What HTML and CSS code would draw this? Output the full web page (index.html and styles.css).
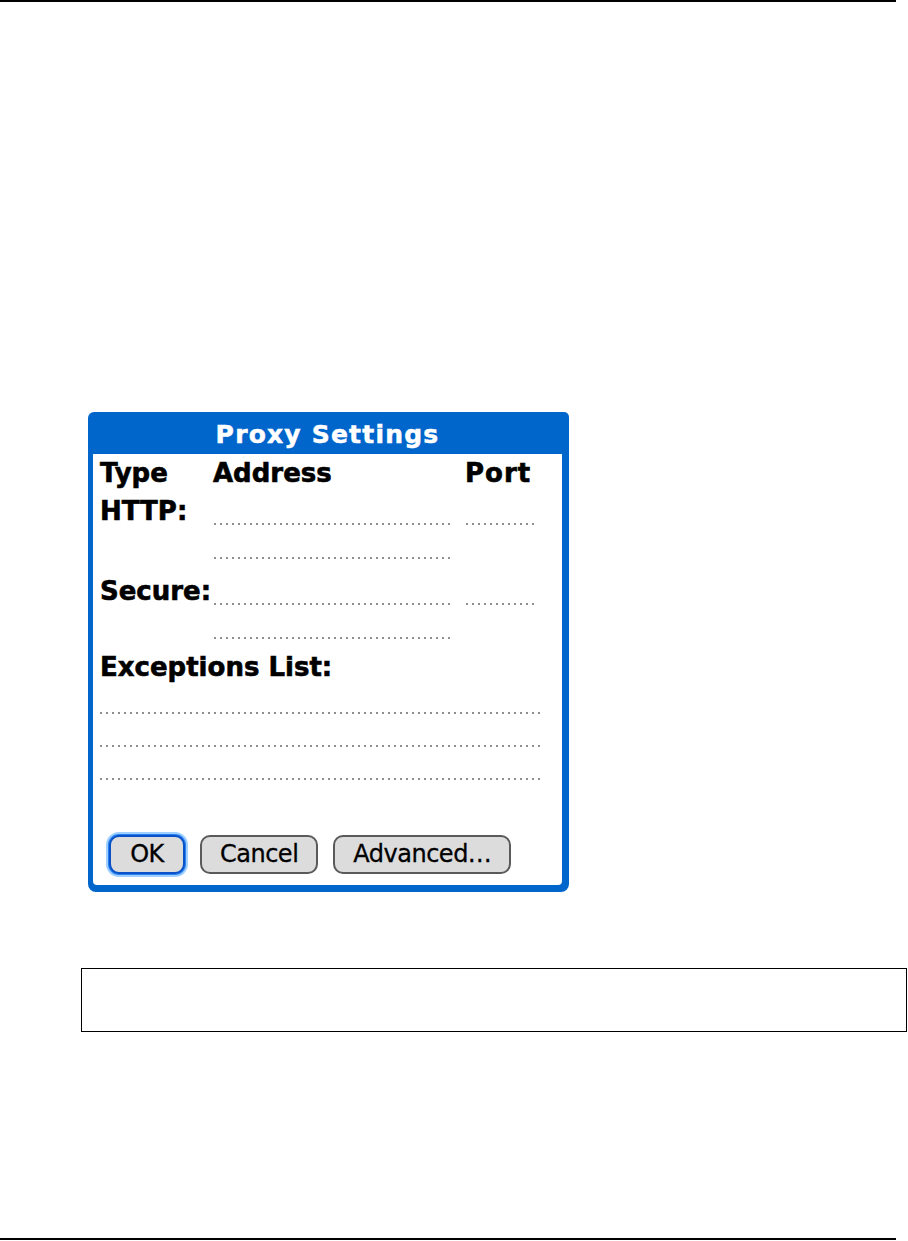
FILE: index.html
```html
<!DOCTYPE html>
<html lang="en">
<head>
    <meta charset="UTF-8">
    <meta name="viewport" content="width=device-width, initial-scale=1.0">
    <title>Proxy Settings</title>
    <link rel="stylesheet" href="styles.css">
</head>
<body>
    <div class="page">
        <div class="page-rule"></div>

        <div class="dialog">
            <div class="dialog-title">Proxy Settings</div>
            <div class="dialog-body">
                <div class="proxy-head">
                    <span class="col-label">Type</span>
                    <span class="col-address">Address</span>
                    <span class="col-port">Port</span>
                </div>

                <div class="proxy-row">
                    <div class="col-label">HTTP:</div>
                    <div class="col-address">
                        <div class="field"></div>
                        <div class="field"></div>
                    </div>
                    <div class="col-port">
                        <div class="field"></div>
                    </div>
                </div>

                <div class="proxy-row">
                    <div class="col-label">Secure:</div>
                    <div class="col-address">
                        <div class="field"></div>
                        <div class="field"></div>
                    </div>
                    <div class="col-port">
                        <div class="field"></div>
                    </div>
                </div>

                <div class="exceptions">
                    <div class="exceptions-label">Exceptions List:</div>
                    <div class="field field-wide"></div>
                    <div class="field field-wide"></div>
                    <div class="field field-wide"></div>
                </div>

                <div class="dialog-buttons">
                    <button class="palm-btn is-default">OK</button>
                    <button class="palm-btn">Cancel</button>
                    <button class="palm-btn">Advanced…</button>
                </div>
            </div>
        </div>

        <div class="note-box"></div>

        <div class="page-rule page-rule-bottom"></div>
    </div>
</body>
</html>
```

FILE: styles.css
```css
* {
    margin: 0;
    padding: 0;
    box-sizing: border-box;
}

body {
    background: white;
    font-family: 'DejaVu Sans', sans-serif;
    color: #000;
}

.page {
    width: 908px;
    height: 1241px;
}

.page-rule {
    width: 896px;
    height: 2px;
    background: #000;
}

.page-rule-bottom {
    margin-top: 206px;
}

/* palm dialog */
.dialog {
    width: 481px;
    height: 480px;
    margin: 410px 0 0 88px;
    background: #0066cc;
    border-radius: 6px 5px 8px 8px;
    padding: 0 7px 7px 5px;
    display: flex;
    flex-direction: column;
}

.dialog-title {
    height: 42px;
    padding-top: 4px;
    line-height: 38px;
    text-align: center;
    color: white;
    font-size: 25px;
    font-weight: bold;
    letter-spacing: 1.2px;
    -webkit-text-stroke: 0.5px white;
}

.dialog-body {
    flex: 1;
    background: white;
    border-radius: 0 0 4px 4px;
    padding: 4px 7px 0 7px;
}

.proxy-head,
.proxy-row,
.exceptions-label {
    font-size: 26px;
    font-weight: bold;
    -webkit-text-stroke: 0.6px #000;
}

.proxy-head,
.proxy-row {
    display: flex;
    line-height: 30px;
}

.proxy-head {
    height: 30px;
    margin-bottom: 8px;
}

.proxy-row {
    margin-bottom: 17px;
}

.proxy-row + .proxy-row {
    margin-bottom: 14px;
}

.col-label {
    width: 114px;
    white-space: nowrap;
}

.col-address {
    width: 238px;
    display: flex;
    flex-direction: column;
    gap: 5px;
}

.col-port {
    width: 70px;
    margin-left: 14px;
}

.proxy-head .col-address {
    margin-left: -1px;
}

.proxy-head .col-port {
    margin-left: 14px;
    letter-spacing: 1px;
}

.field {
    height: 29px;
    background: repeating-linear-gradient(to right, #8e8e8e 0 2px, transparent 2px 6px) left bottom / 100% 2px no-repeat;
}

.exceptions-label {
    line-height: 28px;
    height: 28px;
    white-space: nowrap;
}

.field-wide {
    width: 442px;
    height: 33px;
}

.dialog-buttons {
    display: flex;
    gap: 15px;
    margin: 55px 0 0 9px;
}

.palm-btn {
    height: 39px;
    padding: 0 18px;
    font-family: 'DejaVu Sans', sans-serif;
    font-size: 24px;
    letter-spacing: -0.5px;
    color: #000;
    background: #dcdcdc;
    border: 2px solid #5a5a5a;
    border-radius: 10px;
    line-height: 35px;
    -webkit-text-stroke: 0.3px #000;
}

.palm-btn.is-default {
    width: 76px;
    padding: 0;
    border-color: #0a52c8;
    box-shadow: 0 0 0 1px #2a80f0, 0 0 0 3px #9fd0ff;
}

.note-box {
    width: 826px;
    height: 64px;
    margin: 76px 0 0 81px;
    border: 1px solid #000;
}
```
